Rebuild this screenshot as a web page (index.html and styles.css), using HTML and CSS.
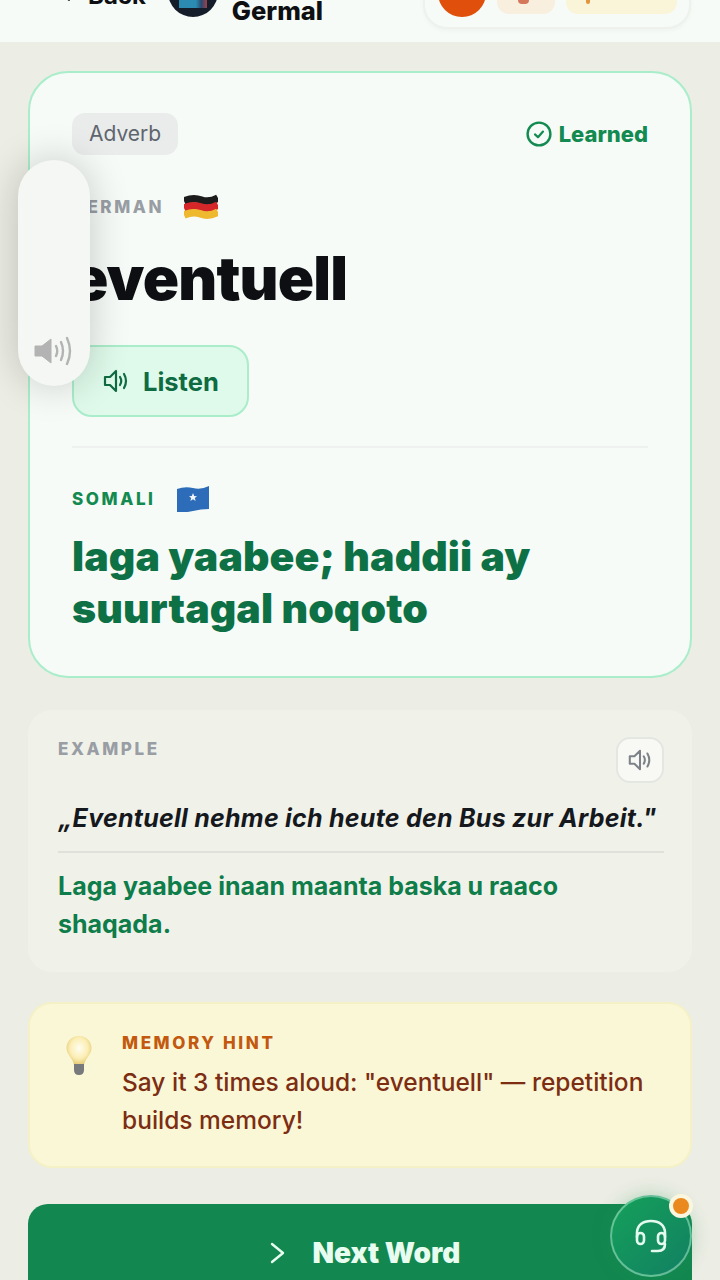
FILE: index.html
```html
<!DOCTYPE html>
<html lang="en">
<head>
  <meta charset="UTF-8">
  <meta name="viewport" content="width=device-width, initial-scale=1.0">
  <title>Germal</title>
  <link rel="stylesheet" href="styles.css">
</head>
<body>
  <header class="topbar">
    <a class="back">
      <svg class="back-icon" width="14" height="14" viewBox="0 0 14 14"><path d="M9 1 L4 6 L9 11" fill="none" stroke="#333" stroke-width="2" stroke-linecap="round"/></svg>
      <span>Back</span>
    </a>
    <div class="brand">
      <div class="logo"><span class="logo-screen"></span></div>
      <div class="brand-name">Germal</div>
    </div>
    <div class="stats">
      <span class="stat-dot"></span>
      <span class="stat-tag stat-fire"><i class="stat-mark stat-mark-fire"></i></span>
      <span class="stat-tag stat-xp"><i class="stat-mark stat-mark-xp"></i></span>
    </div>
  </header>

  <main class="page">
    <section class="word-card">
      <div class="word-top">
        <span class="pos">Adverb</span>
        <span class="learned">
          <svg width="26" height="26" viewBox="0 0 26 26"><circle cx="13" cy="13" r="11.4" fill="none" stroke="#128a50" stroke-width="2.4"/><path d="M9 13.4 L12 16.2 L17 10.6" fill="none" stroke="#128a50" stroke-width="2.2" stroke-linecap="round" stroke-linejoin="round"/></svg>
          Learned
        </span>
      </div>

      <div class="lang-row lang-de">
        <span class="lang lang-grey">GERMAN</span>
        <svg class="flag" width="34" height="26" viewBox="0 0 34 26" fill="none" stroke-width="7.6">
          <path d="M0 7 Q9 3 17 6 T34 4" stroke="#1c1c1c"/>
          <path d="M0 14 Q9 10 17 13 T34 11" stroke="#d5262a"/>
          <path d="M0 21 Q9 17 17 20 T34 18" stroke="#eeb92f"/>
        </svg>
      </div>
      <h1 class="word">eventuell</h1>

      <button class="listen">
        <svg width="28" height="28" viewBox="0 0 28 28" fill="none" stroke="#0f6b42" stroke-width="2.2" stroke-linejoin="round" stroke-linecap="round"><path d="M3 10 H8 L14 4 V24 L8 18 H3 Z"/><path d="M18 10 Q20.5 14 18 18"/><path d="M22 7 Q26 14 22 21"/></svg>
        Listen
      </button>

      <div class="rule"></div>

      <div class="lang-row lang-so">
        <span class="lang lang-green">SOMALI</span>
        <svg class="flag" width="34" height="26" viewBox="0 0 34 26">
          <path d="M1 3 Q9 0 17 2 T33 0 V23 Q25 23 17 25 T1 26 Z" fill="#2c6cb8"/>
          <path d="M17 7 L18.2 10 L21 10.2 L18.8 12 L19.6 15 L17 13.3 L14.4 15 L15.2 12 L13 10.2 L15.8 10 Z" fill="#f2f6fa"/>
        </svg>
      </div>
      <p class="meaning">laga yaabee; haddii ay suurtagal noqoto</p>
    </section>

    <section class="example-card">
      <div class="example-top">
        <span class="lang lang-grey example-label">EXAMPLE</span>
        <button class="sound-btn">
          <svg width="26" height="26" viewBox="0 0 28 28" fill="none" stroke="#7d8288" stroke-width="2.2" stroke-linejoin="round" stroke-linecap="round"><path d="M3 10 H8 L14 4 V24 L8 18 H3 Z"/><path d="M18 10 Q20.5 14 18 18"/><path d="M22 7 Q26 14 22 21"/></svg>
        </button>
      </div>
      <p class="quote">„Eventuell nehme ich heute den Bus zur Arbeit."</p>
      <p class="translation">Laga yaabee inaan maanta baska u raaco shaqada.</p>
    </section>

    <section class="hint-card">
      <svg class="bulb" width="28" height="42" viewBox="0 0 28 42">
        <defs>
          <radialGradient id="glass" cx="50%" cy="42%" r="60%"><stop offset="0" stop-color="#fffdf0"/><stop offset="0.6" stop-color="#fbeeb4"/><stop offset="1" stop-color="#e2c46c"/></radialGradient>
        </defs>
        <path d="M14 1 C6 1 1.5 7 1.5 13 C1.5 20 8 23 9 30 H19 C20 23 26.5 20 26.5 13 C26.5 7 22 1 14 1 Z" fill="url(#glass)"/>
        <path d="M9 29 H19 V35 Q19 40 14 40 Q9 40 9 35 Z" fill="#77797a"/>
      </svg>
      <div class="hint-body">
        <div class="hint-label">MEMORY HINT</div>
        <p class="hint-text">Say it 3 times aloud: "eventuell" — repetition builds memory!</p>
      </div>
    </section>

    <button class="next">
      <svg width="16" height="24" viewBox="0 0 16 24"><path d="M3 3 L14 12 L3 21" fill="none" stroke="#e8fdf0" stroke-width="2.4" stroke-linecap="round" stroke-linejoin="round"/></svg>
      Next Word
    </button>
  </main>

  <!-- system volume popup, sits over the card -->
  <div class="volume">
    <svg width="40" height="30" viewBox="0 0 40 30"><path d="M1 10 H8 L17 3 V27 L8 20 H1 Z" fill="#b2b3b2" stroke="#b2b3b2" stroke-linejoin="round"/><g fill="none" stroke="#b2b3b2" stroke-width="2.4" stroke-linecap="round"><path d="M22 10 Q24.5 15 22 20"/><path d="M27 6 Q31 15 27 24"/><path d="M33 2 Q39 15 33 28"/></g></svg>
  </div>

  <div class="support">
    <svg width="36" height="36" viewBox="0 0 36 36" fill="none" stroke="#e6fbef" stroke-width="2.6" stroke-linecap="round" stroke-linejoin="round"><path d="M4 19 V15 C4 7 10 3 18 3 C26 3 32 7 32 15 V19"/><rect x="4" y="15" width="7" height="11" rx="3.5"/><rect x="25" y="15" width="7" height="11" rx="3.5"/><path d="M32 26 C32 31 29 33 25 33 H19"/></svg>
    <span class="support-dot"></span>
  </div>
</body>
</html>
```

FILE: styles.css
```css
*{
  margin: 0;
  padding: 0;
  box-sizing: border-box;
}

html,
body{
  width: 720px;
  height: 1280px;
  overflow: hidden;
}

body{
  position: relative;
  background: #ecede4;
  font-family: Inter, "Noto Sans", sans-serif;
  color: #0d0f12;
}

button{
  font-family: inherit;
  border: 0;
}

.topbar{
  display: flex;
  align-items: flex-end;
  height: 42px;
  background: #f6fbf8;
  overflow: hidden;
}

.back{
  display: flex;
  align-items: center;
  gap: 14px;
  height: 24px;
  margin: 0 0 34px 60px;
  font-size: 24px;
  font-weight: 700;
  line-height: 24px;
}

.brand{
  display: flex;
  align-items: flex-end;
  gap: 14px;
  margin-left: 22px;
}

.logo{
  width: 50px;
  height: 50px;
  margin-bottom: 25px;
  border-radius: 50%;
  background: #161d2a;
  overflow: hidden;
}
.logo-screen{
  display: block;
  width: 28px;
  height: 41px;
  margin: 0 auto;
  background: linear-gradient(90deg, #2b8bb0, #2b8bb0 60%, #2a4a70 80%, #a0404a);
}

.brand-name{
  margin-bottom: 17px;
  font-size: 25.5px;
  font-weight: 800;
  line-height: 28px;
}

.stats{
  display: flex;
  align-items: flex-end;
  gap: 11px;
  width: 268px;
  height: 60px;
  margin: 0 29px 13px auto;
  padding: 0 12px 10px 13px;
  background: #f7fbf8;
  border: 2px solid #eef1ec;
  border-radius: 0 0 24px 24px;
  box-shadow: 0 2px 4px rgba(0,0,0,0.03);
}

.stat-dot{
  width: 48px;
  height: 48px;
  border-radius: 50%;
  background: #e04f0b;
}

.stat-tag{
  position: relative;
  height: 30px;
  margin-bottom: 3px;
  border-radius: 12px;
}
.stat-fire{
  width: 58px;
  background: #f8efdf;
}
.stat-xp{
  width: 112px;
  background: #faf5d8;
}
.stat-mark{
  position: absolute;
  top: 14px;
  height: 6px;
  border-radius: 0 0 4px 4px;
}
.stat-mark-fire{
  left: 21px;
  width: 11px;
  background: #d4775a;
}
.stat-mark-xp{
  left: 20px;
  width: 4px;
  background: #e2953a;
}

.page{
  display: flex;
  flex-direction: column;
  padding: 29px 28px 0;
}

.word-card{
  height: 607px;
  padding: 40px 42px 0;
  background: #f6fbf7;
  border: 2px solid #a9edca;
  border-radius: 40px;
}

.word-top{
  display: flex;
  align-items: center;
  justify-content: space-between;
}

.pos{
  padding: 0 17px;
  height: 42px;
  line-height: 42px;
  font-size: 21px;
  color: #5f656e;
  background: #e9ecea;
  border-radius: 13px;
}

.learned{
  display: flex;
  align-items: center;
  gap: 7px;
  font-size: 22px;
  font-weight: 800;
  color: #128a50;
}

.lang-row{
  display: flex;
  align-items: center;
  gap: 20px;
}
.lang-de{
  margin-top: 39px;
}
.lang-so{
  margin-top: 38px;
}

.lang{
  font-size: 17px;
  font-weight: 800;
  letter-spacing: 2.6px;
}
.lang-grey{
  color: #999da4;
}
.lang-green{
  color: #128a50;
}

.word{
  margin-top: 23px;
  font-size: 60px;
  font-weight: 900;
  line-height: 70px;
  letter-spacing: -0.8px;
}

.listen{
  display: flex;
  align-items: center;
  gap: 13px;
  width: 177px;
  height: 72px;
  margin-top: 32px;
  padding-left: 28px;
  font-size: 25.5px;
  font-weight: 700;
  color: #0f6b42;
  background: #dffaea;
  border: 2px solid #a9edca;
  border-radius: 20px;
}

.rule{
  height: 2px;
  margin-top: 29px;
  background: #eef1ef;
}

.meaning{
  margin-top: 18px;
  font-size: 41px;
  font-weight: 900;
  line-height: 52px;
  letter-spacing: 0.1px;
  color: #0e7146;
}

.example-card{
  height: 262px;
  margin-top: 32px;
  padding: 27px 28px 0 30px;
  background: #f0f2ea;
  border-radius: 24px;
}

.example-top{
  display: flex;
  align-items: flex-start;
  justify-content: space-between;
  height: 65px;
}

.example-label{
  margin-top: 2px;
}

.sound-btn{
  display: flex;
  align-items: center;
  justify-content: center;
  width: 48px;
  height: 46px;
  background: #f8f9f5;
  border: 2px solid #e4e6e1;
  border-radius: 14px;
}

.quote{
  height: 51px;
  padding-top: 1px;
  font-size: 25px;
  font-style: italic;
  font-weight: 700;
  line-height: 30px;
  color: #15181c;
  letter-spacing: 0.25px;
  white-space: nowrap;
  border-bottom: 2px solid #dfe1da;
}

.translation{
  max-width: 560px;
  margin-top: 14px;
  font-size: 25px;
  font-weight: 700;
  line-height: 38px;
  color: #0e7d4a;
}

.hint-card{
  display: flex;
  gap: 29px;
  height: 166px;
  margin-top: 30px;
  padding: 29px 30px 0 35px;
  background: #faf7d7;
  border: 2px solid #f5f1c6;
  border-radius: 24px;
}

.bulb{
  flex: none;
  margin-top: 2px;
}

.hint-label{
  font-size: 17px;
  font-weight: 800;
  line-height: 20px;
  letter-spacing: 2.6px;
  color: #c2590f;
}

.hint-text{
  margin-top: 10px;
  font-size: 24.5px;
  font-weight: 500;
  line-height: 38px;
  color: #7c2d12;
}

.next{
  display: flex;
  flex: none;
  align-items: center;
  justify-content: center;
  gap: 28px;
  width: 664px;
  height: 98px;
  margin-top: 36px;
  padding-left: 9px;
  font-size: 28px;
  font-weight: 900;
  color: #e8fdf0;
  background: #12874f;
  border-radius: 20px;
}

.volume{
  position: absolute;
  top: 160px;
  left: 18px;
  display: flex;
  align-items: flex-end;
  justify-content: center;
  width: 72px;
  height: 226px;
  padding-bottom: 20px;
  background: #f5f7f4;
  border-radius: 36px;
  box-shadow: 0 0 40px rgba(0,0,0,0.2);
}

.support{
  position: absolute;
  top: 1195px;
  left: 610px;
  display: flex;
  align-items: center;
  justify-content: center;
  width: 82px;
  height: 82px;
  background: linear-gradient(135deg, #15a05a, #128062);
  border: 2px solid rgba(200,250,225,0.45);
  border-radius: 50%;
  box-shadow: 0 0 18px rgba(30,150,90,0.3);
}

.support-dot{
  position: absolute;
  top: -3px;
  right: -3px;
  width: 24px;
  height: 24px;
  background: #ea8a1e;
  border: 4px solid #fbf6df;
  border-radius: 50%;
}
```
